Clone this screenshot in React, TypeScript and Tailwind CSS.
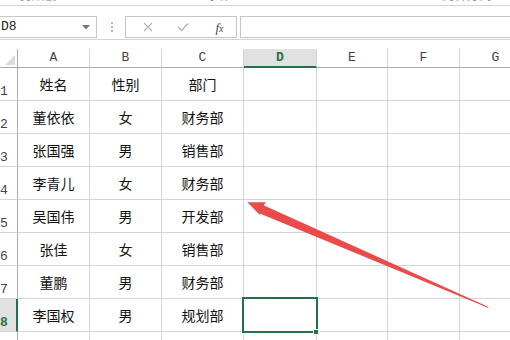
import React from 'react';

const rows = [
  ['姓名', '性别', '部门'],
  ['董依依', '女', '财务部'],
  ['张国强', '男', '销售部'],
  ['李青儿', '女', '财务部'],
  ['吴国伟', '男', '开发部'],
  ['张佳', '女', '销售部'],
  ['董鹏', '男', '财务部'],
  ['李国权', '男', '规划部'],
  ['', '', ''],
];

// widths include the right grid line
const cols = [
  { key: 'A', w: 'w-[72px]' },
  { key: 'B', w: 'w-[72px]' },
  { key: 'C', w: 'w-[82px]' },
  { key: 'D', w: 'w-[73px]' },
  { key: 'E', w: 'w-[71px]' },
  { key: 'F', w: 'w-[72px]' },
  { key: 'G', w: 'w-[72px]' },
];

const mono = "font-['Liberation_Mono',monospace]";
const cjk = "font-['Noto_Sans_CJK_SC',sans-serif]";

function FormulaBar() {
  return (
    <div className="h-[34px] border-b border-[#d5d5d5] flex items-start pt-[10px]">
      {/* Name box */}
      <div className="w-[97px] h-[22px] shrink-0 border-y border-r border-[#c6c6c6] flex items-center justify-between pr-[6px]">
        <span className={`${mono} text-[13px] text-[#222] pl-[1px]`}>D8</span>
        <svg width="8" height="5" viewBox="0 0 8 5">
          <path d="M0 0h8L4 4.5z" fill="#777" />
        </svg>
      </div>
      {/* Grip */}
      <div className="w-[28px] h-[22px] shrink-0 flex flex-col items-center justify-center gap-[2px] pl-[1px]">
        <span className="w-[2px] h-[2px] bg-[#b5b5b5]" />
        <span className="w-[2px] h-[2px] bg-[#b5b5b5]" />
        <span className="w-[2px] h-[2px] bg-[#b5b5b5]" />
      </div>
      {/* Buttons */}
      <div className="w-[112px] h-[22px] shrink-0 border border-[#c6c6c6] flex items-center">
        <div className="w-[40px] flex justify-center pl-[4px]">
          <svg width="10" height="10" viewBox="0 0 10 10">
            <path d="M1 1l8 8M9 1l-8 8" stroke="#b3b3b3" strokeWidth="1.1" fill="none" />
          </svg>
        </div>
        <div className="w-[33px] flex justify-center">
          <svg width="12" height="10" viewBox="0 0 12 10">
            <path d="M1 5l3.5 3.5L11 1.5" stroke="#b3b3b3" strokeWidth="1.4" fill="none" />
          </svg>
        </div>
        <div className="flex-1 flex justify-center pl-[4px]">
          <span className="font-['Liberation_Serif',serif] italic text-[13px] text-[#444] leading-none">
            f<span className="text-[10px]">x</span>
          </span>
        </div>
      </div>
      <div className="w-[3px] shrink-0" />
      <div className="flex-1 h-[22px] border-y border-l border-[#c6c6c6]" />
    </div>
  );
}

function RibbonTail() {
  return (
    <div className="h-[6px] border-b border-[#d5d5d5] overflow-hidden">
      <div className={`${cjk} flex text-[12px] leading-[12px] text-[#888] -mt-[11px]`}>
        <span className="ml-[20px] w-[77px]">剪贴板</span>
        <span className="w-[110px] text-[10px]">↘</span>
        <span className="w-[140px]">字体</span>
        <span className="w-[96px] text-[10px]">↘</span>
        <span>对齐方式</span>
      </div>
    </div>
  );
}

function HeaderRow() {
  return (
    <div className="flex h-[19px]">
      <div className="w-[18px] shrink-0 border-r border-b border-[#ababab] relative">
        <div className="absolute right-[2px] bottom-[2px] w-0 h-0 border-l-[10px] border-l-transparent border-b-[10px] border-b-[#dcdcdc]" />
      </div>
      {cols.map((c) => {
        const sel = c.key === 'D';
        return (
          <div
            key={c.key}
            className={`${c.w} shrink-0 border-r border-[#d5d5d5] flex items-center justify-center ${mono} text-[13px] ${
              sel
                ? 'bg-[#e1e1e1] border-b-2 border-b-[#217346] text-[#217346] font-bold'
                : 'border-b border-b-[#ababab] text-[#444]'
            }`}
          >
            {c.key}
          </div>
        );
      })}
      <div className="flex-1 border-b border-[#ababab]" />
    </div>
  );
}

export default function App() {
  return (
    <div className="w-[510px] h-[340px] overflow-hidden bg-white relative">
      <RibbonTail />
      <FormulaBar />
      <div className="h-[9px]" />
      <HeaderRow />

      {rows.map((r, i) => {
        const sel = i === 7;
        return (
          <div key={i} className="flex h-[33px]">
            <div
              className={`w-[18px] shrink-0 border-b border-[#d5d5d5] flex items-end ${mono} text-[13px] leading-none pb-[2px] ${
                sel
                  ? 'bg-[#e1e1e1] border-r-2 border-r-[#217346] text-[#217346] font-bold'
                  : 'border-r border-r-[#ababab] text-[#444]'
              }`}
            >
              {i + 1}
            </div>
            {cols.map((c, j) => (
              <div
                key={c.key}
                className={`${c.w} shrink-0 border-r border-b border-[#d5d5d5] flex items-center justify-center ${cjk} text-[14px] text-[#111]`}
              >
                {r[j] ?? ''}
              </div>
            ))}
            <div className="flex-1 border-b border-[#d5d5d5]" />
          </div>
        );
      })}

      {/* Active cell D8 */}
      <div className="absolute left-[242px] top-[297px] w-[76px] h-[36px] border-2 border-[#217346]" />
      <div className="absolute left-[313px] top-[329px] w-[6px] h-[6px] bg-[#217346] border border-white" />

      {/* Annotation arrow */}
      <svg className="absolute inset-0 pointer-events-none" width="510" height="340" viewBox="0 0 510 340">
        <polygon
          points="247.3,202.3 266,202.3 263.6,205.2 488.6,306.9 487.9,307.7 259.8,213.4 260.7,215.7"
          fill="#e94a4a"
        />
      </svg>
    </div>
  );
}
